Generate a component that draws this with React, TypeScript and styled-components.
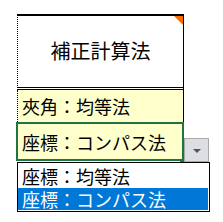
import styled, { createGlobalStyle } from "styled-components";

const GlobalStyle = createGlobalStyle`
  html, body {
    margin: 0;
    padding: 0;
    background: #fff;
  }
  body {
    font-family: "Noto Sans CJK JP", "Noto Sans", sans-serif;
    color: #000;
  }
`;

const Sheet = styled.div`
  width: 223px;
  height: 222px;
  padding: 14px 0 0 16px;
  box-sizing: border-box;
`;

const Column = styled.div`
  display: flex;
  flex-direction: column;
  width: 194px;
`;

const TitleCell = styled.div`
  position: relative;
  box-sizing: border-box;
  margin-left: 1px;
  width: 167px;
  height: 76px;
  border-top: 2px solid #000;
  border-left: 1px dotted #000;
  border-right: 1px solid #000;
  border-bottom: 3px double #000;
  display: flex;
  align-items: center;
  justify-content: center;
  font-size: 20px;
  line-height: 1;
  padding-bottom: 2px;
`;

const CommentMark = styled.div`
  position: absolute;
  top: 0;
  right: 0;
  width: 0;
  height: 0;
  border-top: 9px solid #ff6a00;
  border-left: 9px solid transparent;
`;

const NoteCell = styled.div`
  box-sizing: border-box;
  margin-left: 1px;
  width: 167px;
  height: 32px;
  background: #ffffcc;
  border-left: 1px dotted #000;
  border-right: 1px solid #000;
  display: flex;
  align-items: center;
  padding-left: 4px;
  font-size: 18px;
  line-height: 1;
`;

const ActiveRow = styled.div`
  display: flex;
  align-items: flex-end;
`;

const ActiveCell = styled.div`
  position: relative;
  box-sizing: border-box;
  width: 168px;
  height: 39px;
  background: #ffffcc;
  border: 2px solid #217346;
  display: flex;
  align-items: center;
  padding-left: 4px;
  font-size: 18px;
  line-height: 1;
`;

const FillHandle = styled.div`
  position: absolute;
  right: -2px;
  bottom: -3px;
  width: 4px;
  height: 3px;
  background: #217346;
`;

const DropButton = styled.div`
  box-sizing: border-box;
  width: 25px;
  height: 24px;
  margin-bottom: -1px;
  background: #dddee2;
  border: 1px solid #a8a8a8;
  display: flex;
  align-items: center;
  justify-content: center;
`;

const Arrow = styled.div`
  width: 0;
  height: 0;
  border-left: 4px solid transparent;
  border-right: 4px solid transparent;
  border-top: 4px solid #555;
  margin-top: 1px;
`;

const ListBox = styled.div`
  box-sizing: border-box;
  margin-left: 1px;
  margin-top: 1px;
  width: 193px;
  height: 50px;
  background: #fff;
  border: 1px solid #000;
  padding: 0 1px 1px 0;
  display: flex;
  flex-direction: column;
`;

const ListItem = styled.div<{ $selected?: boolean }>`
  height: ${(p) => (p.$selected ? 22 : 25)}px;
  display: flex;
  align-items: center;
  padding-left: 4px;
  font-size: 18px;
  line-height: 1;
  white-space: nowrap;
  background: ${(p) => (p.$selected ? "#0078d7" : "transparent")};
  color: ${(p) => (p.$selected ? "#fff" : "#000")};
`;

export default function App() {
  return (
    <>
      <GlobalStyle />
      <Sheet>
        <Column>
          <TitleCell>
            補正計算法
            <CommentMark />
          </TitleCell>
          <NoteCell>夾角：均等法</NoteCell>
          <ActiveRow>
            <ActiveCell>
              座標：コンパス法
              <FillHandle />
            </ActiveCell>
            <DropButton>
              <Arrow />
            </DropButton>
          </ActiveRow>
          <ListBox>
            <ListItem>座標：均等法</ListItem>
            <ListItem $selected>座標：コンパス法</ListItem>
          </ListBox>
        </Column>
      </Sheet>
    </>
  );
}
